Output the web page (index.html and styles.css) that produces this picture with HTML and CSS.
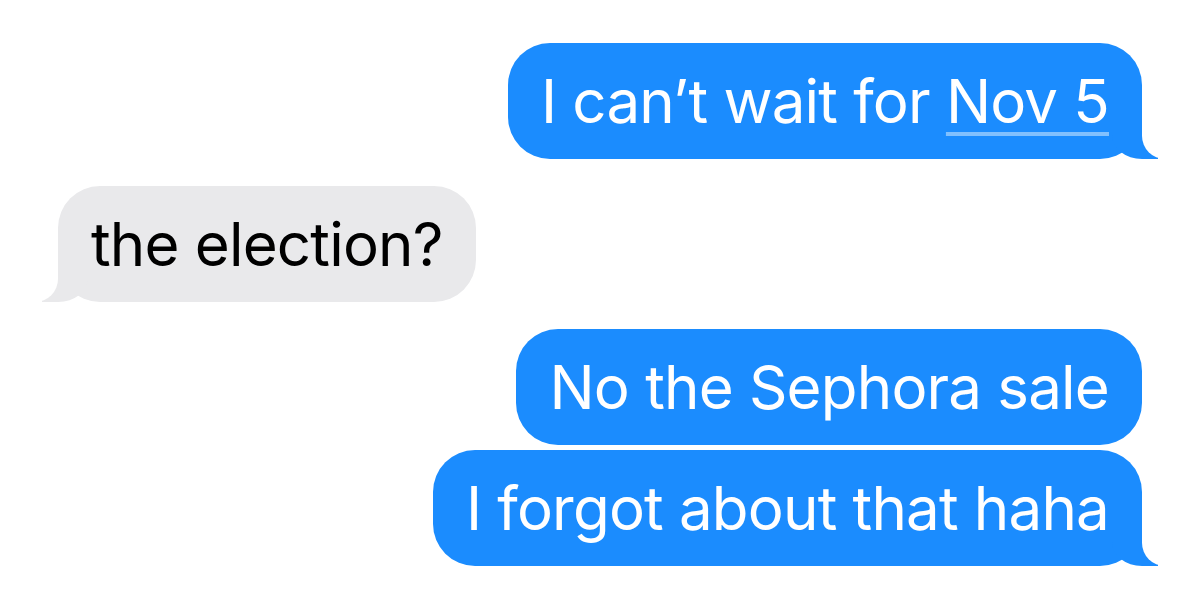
FILE: index.html
```html
<!DOCTYPE html>
<html lang="en">

<head>
    <meta charset="UTF-8">
    <meta name="viewport" content="width=device-width, initial-scale=1.0">
    <title>Messages</title>
    <link rel="stylesheet" href="styles.css">
</head>

<body>
    <div class="thread">
        <div class="msg sent">I can’t wait for <span class="date">Nov 5</span></div>
        <div class="msg received">the election?</div>
        <div class="msg sent no-tail">No the Sephora sale</div>
        <div class="msg sent">I forgot about that haha</div>
    </div>
</body>

</html>
```

FILE: styles.css
```css
body {
    margin: 0;
    background: #fff;
    font-family: Inter, "Liberation Sans", sans-serif;
    overflow: hidden;
}

.thread {
    display: flex;
    flex-direction: column;
    padding: 43px 58px 0;
}

.msg {
    position: relative;
    height: 116px;
    line-height: 116px;
    padding: 0 33px;
    border-radius: 42px;
    font-size: 60px;
    letter-spacing: -0.8px;
    white-space: nowrap;
}

.msg + .msg {
    margin-top: 27px;
}

.no-tail + .msg {
    margin-top: 5px;
}

.sent {
    align-self: flex-end;
    background: #1b8cfe;
    color: #fff;
}

.received {
    align-self: flex-start;
    background: #e9e9eb;
    color: #000;
}

/* tails */
.msg::before,
.msg::after {
    content: "";
    position: absolute;
    bottom: 0;
    height: 46px;
}

.sent::before {
    right: -16px;
    width: 46px;
    background: #1b8cfe;
    border-bottom-left-radius: 30px 24px;
}

.sent::after {
    right: -40px;
    width: 40px;
    background: #fff;
    border-bottom-left-radius: 23px;
}

.received::before {
    left: -16px;
    width: 46px;
    background: #e9e9eb;
    border-bottom-right-radius: 30px 24px;
}

.received::after {
    left: -40px;
    width: 40px;
    background: #fff;
    border-bottom-right-radius: 23px;
}

.no-tail::before,
.no-tail::after {
    display: none;
}

.date {
    text-decoration: underline;
    text-decoration-color: rgba(255, 255, 255, 0.45);
    text-decoration-thickness: 4px;
    text-underline-offset: 9px;
}
```
